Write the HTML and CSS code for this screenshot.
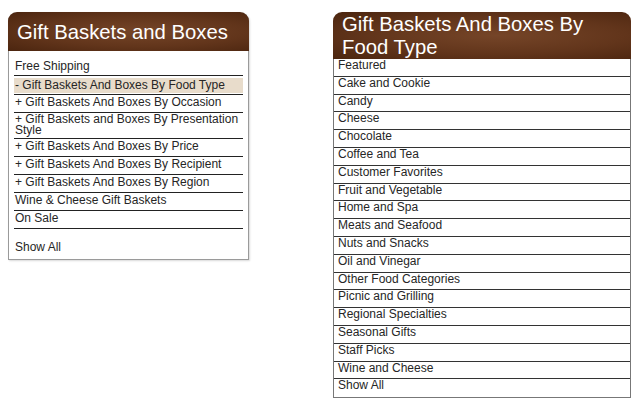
FILE: index.html
```html
<!DOCTYPE html>
<html>
<head>
<meta charset="utf-8">
<link rel="stylesheet" href="styles.css">
</head>
<body>
<div class="page">
  <div class="panel panel-left">
    <div class="head head-left">Gift Baskets and Boxes</div>
    <div class="list-left">
      <div class="item">Free Shipping</div>
      <div class="item active"><span>- Gift Baskets And Boxes By Food Type</span></div>
      <div class="item">+ Gift Baskets And Boxes By Occasion</div>
      <div class="item">+ Gift Baskets and Boxes By Presentation Style</div>
      <div class="item">+ Gift Baskets And Boxes By Price</div>
      <div class="item">+ Gift Baskets And Boxes By Recipient</div>
      <div class="item">+ Gift Baskets And Boxes By Region</div>
      <div class="item">Wine &amp; Cheese Gift Baskets</div>
      <div class="item">On Sale</div>
      <div class="show-all">Show All</div>
    </div>
  </div>
  <div class="panel panel-right">
    <div class="head head-right">Gift Baskets And Boxes By Food Type</div>
    <div class="list-right">
      <div class="row">Featured</div>
      <div class="row">Cake and Cookie</div>
      <div class="row">Candy</div>
      <div class="row">Cheese</div>
      <div class="row">Chocolate</div>
      <div class="row">Coffee and Tea</div>
      <div class="row">Customer Favorites</div>
      <div class="row">Fruit and Vegetable</div>
      <div class="row">Home and Spa</div>
      <div class="row">Meats and Seafood</div>
      <div class="row">Nuts and Snacks</div>
      <div class="row">Oil and Vinegar</div>
      <div class="row">Other Food Categories</div>
      <div class="row">Picnic and Grilling</div>
      <div class="row">Regional Specialties</div>
      <div class="row">Seasonal Gifts</div>
      <div class="row">Staff Picks</div>
      <div class="row">Wine and Cheese</div>
      <div class="row last">Show All</div>
    </div>
  </div>
</div>
</body>
</html>
```

FILE: styles.css
```css
html, body {
  margin: 0;
  padding: 0;
  background: #ffffff;
}
body {
  font-family: "Liberation Sans", Arial, sans-serif;
  color: #262626;
}
.page {
  display: flex;
  align-items: flex-start;
  padding: 12px 0 0 8px;
}
.panel {
  box-sizing: border-box;
}
.head {
  color: #ffffff;
  font-size: 20.3px;
  border-radius: 9px 9px 0 0;
  background: radial-gradient(ellipse at 55% 50%, #754528 0%, #62351b 55%, #4b250f 100%);
}
.panel-left {
  width: 241px;
  border: 1px solid #9a9a9a;
  border-top: none;
  border-radius: 9px 9px 0 0;
  box-shadow: 1px 1px 2px rgba(0,0,0,0.15);
}
.head-left {
  margin: 0 -1px;
  height: 39px;
  line-height: 40px;
  padding-left: 9px;
}
.list-left {
  padding: 7px 5px 5px 5px;
  font-size: 12px;
}
.item {
  display: flex;
  align-items: center;
  box-sizing: border-box;
  min-height: 18px;
  line-height: 11.5px;
  padding: 1px 1px;
  border-bottom: 1px solid #222222;
}
.item.active {
  padding: 2px 0 1px 0;
}
.item.active span {
  display: block;
  width: 100%;
  background: #e8dccb;
  padding: 2px 1px 1px;
}
.show-all {
  padding: 11px 1px 0;
  line-height: 14px;
}
.panel-right {
  margin-left: 84px;
  width: 298px;
}
.head-right {
  height: 47px;
  padding: 1px 0 0 9px;
  box-sizing: border-box;
  line-height: 23px;
}
.list-right {
  border: 1px solid #777777;
  border-top: none;
  font-size: 12px;
}
.row {
  line-height: 13.8px;
  padding: 0 4px 3px;
  border-top: 1px solid #333333;
}
.row:first-child {
  border-top: none;
}
.row.last {
  padding-bottom: 4px;
}
```
